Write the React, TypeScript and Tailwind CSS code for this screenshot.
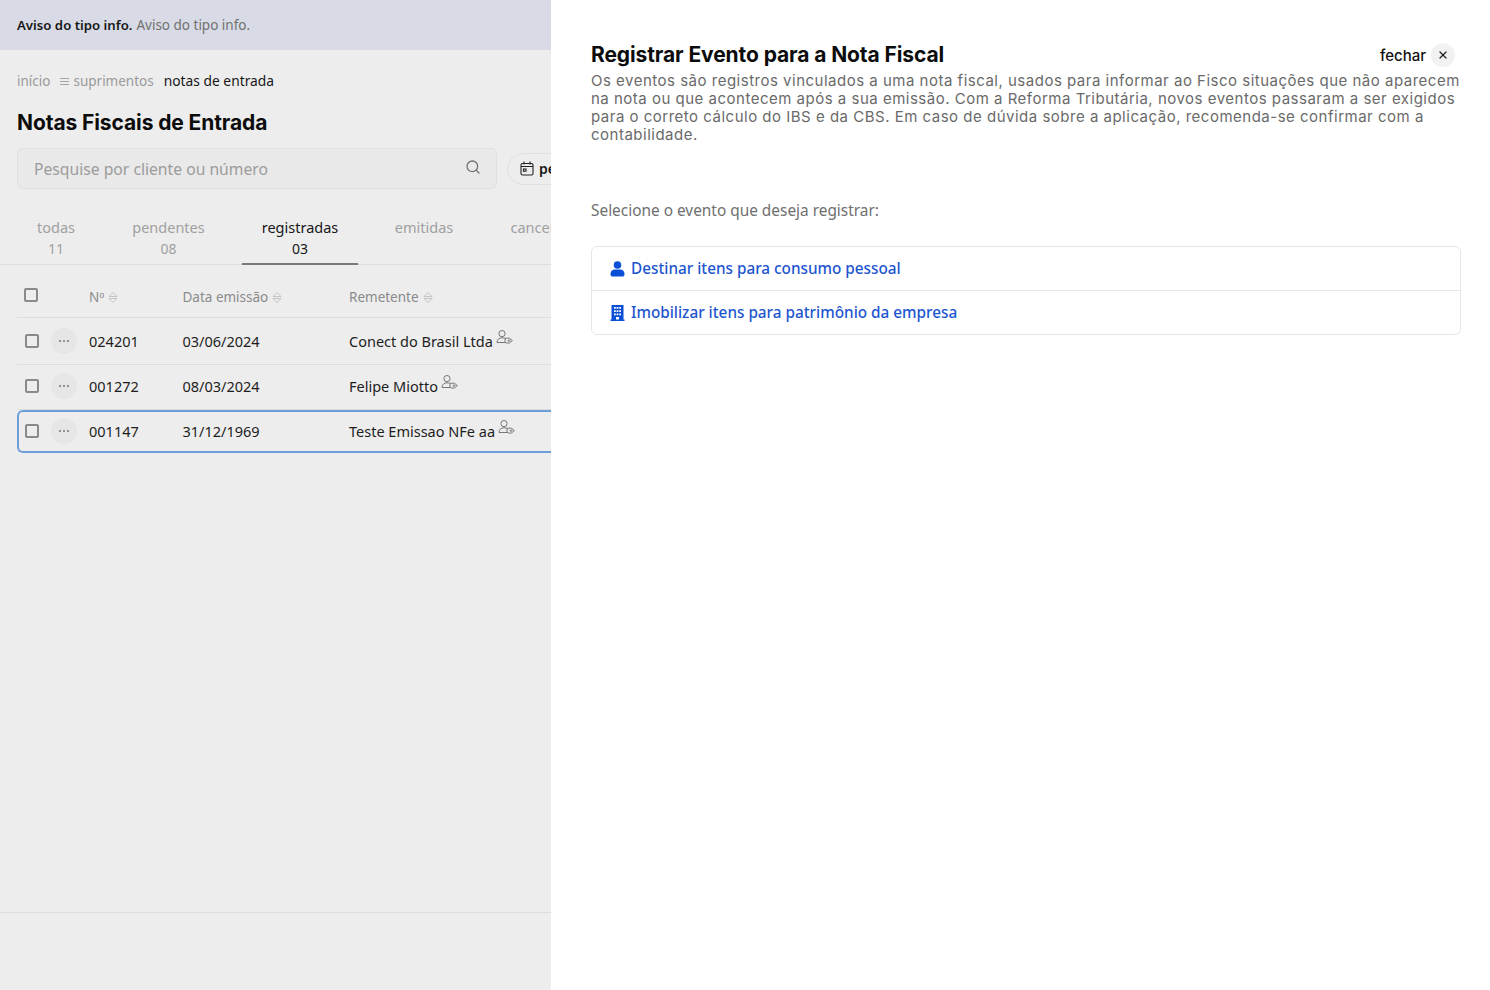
import { useState } from "react";
import { Search, X } from "lucide-react";

const body = "font-['Noto_Sans',sans-serif]";
const head = "font-['Inter',sans-serif]";

function Sort() {
  return (
    <svg width="10" height="13" viewBox="0 0 10 13" fill="none" stroke="#c4c4c4" strokeWidth="1" className="ml-1 mt-px">
      <path d="M1 5.5 L5 1.5 L9 5.5 Z" />
      <path d="M1 7.5 L5 11.5 L9 7.5 Z" />
    </svg>
  );
}

function PersonTag() {
  return (
    <svg width="17" height="14" viewBox="0 0 17 14" fill="none" stroke="#777" strokeWidth="1" className="ml-[3px] -mt-[10px]">
      <circle cx="6" cy="3.6" r="3.1" />
      <path d="M1 12.5 C1 9.4 3.2 7.8 6 7.8 C7.3 7.8 8.4 8 9.4 8.5" />
      <path d="M1 12.5 H10" />
      <path d="M9.4 8.2 H13.4 L16.4 10.6 L13.4 13 H10.4 C9.2 13 8.8 11.5 9 10 Z" />
      <circle cx="13" cy="10.6" r="0.8" />
    </svg>
  );
}

function Box({ className = "" }: { className?: string }) {
  return <div className={`size-[14px] rounded-[2px] border-2 border-[#8a8a8a] ${className}`} />;
}

function More() {
  return (
    <div className="size-[26px] rounded-full bg-[#e6e6e6] flex items-center justify-center gap-[2px] ml-[12px]">
      <span className="size-[2px] rounded-full bg-[#777]" />
      <span className="size-[2px] rounded-full bg-[#777]" />
      <span className="size-[2px] rounded-full bg-[#777]" />
    </div>
  );
}

function Row({ n, d, r, selected, h, ctl }: { n: string; d: string; r: string; selected?: boolean; h: string; ctl: string }) {
  return (
    <div
      className={`flex items-center ${h} ${
        selected ? "border-2 border-r-0 border-[#6d9eda] rounded-l-[6px]" : "border-b border-[#dcdcdc]"
      } ml-[17px] text-[14.5px] text-[#1d1d1d]`}
    >
      <div className={`flex items-center ${ctl}`}>
        <Box />
        <More />
      </div>
      <div className="w-[93.5px]">{n}</div>
      <div className="w-[166.5px]">{d}</div>
      <div className="flex items-center whitespace-nowrap">
        {r}
        <PersonTag />
      </div>
    </div>
  );
}

export default function App() {
  const [tab] = useState("registradas");
  const tabs = [
    ["todas", "11", "w-[78px]"],
    ["pendentes", "08", "w-[115px]"],
    ["registradas", "03", "w-[116px]"],
    ["emitidas", "", "w-[100px]"],
    ["canceladas", "", "w-[116px]"],
  ];
  return (
    <div className={`flex h-[990px] w-[1490px] overflow-hidden bg-white ${body}`}>
      <div className="w-[551px] shrink-0 flex flex-col bg-[#ededed] overflow-hidden">
        <div className="h-[50px] shrink-0 bg-[#d8dbe5] flex items-center pl-[17px] pt-px text-[13.5px]">
          <span className="font-semibold text-[13.2px] text-[#161616]">Aviso do tipo info.</span>
          <span className="ml-1 text-[#707070]">Aviso do tipo info.</span>
        </div>
        <div className="mt-[22px] pl-[17px] h-[18px] flex items-center text-[13.5px] whitespace-nowrap">
          <span className="text-[#9a9a9a] mr-px">início</span>
          <span className="ml-[9px] mr-[4px] flex flex-col gap-[2px] w-[9px]">
            <span className="h-px bg-[#a5a5a5]" />
            <span className="h-px bg-[#a5a5a5]" />
            <span className="h-px bg-[#a5a5a5]" />
          </span>
          <span className="text-[#9a9a9a]">suprimentos</span>
          <span className="ml-[10px] text-[13.8px] text-[#171717]">notas de entrada</span>
        </div>
        <h1 className={`mt-[19px] pl-[17px] h-[28px] leading-[28px] text-[21px] font-bold tracking-[-0.1px] text-[#0c0c0c] whitespace-nowrap ${head}`}>
          Notas Fiscais de Entrada
        </h1>
        <div className="mt-[11px] pl-[17px] flex items-center">
          <div className="w-[480px] h-[41px] shrink-0 rounded-[6px] border border-[#e0e0e0] bg-[#e9e9e9] flex items-center justify-between pl-4 pr-[15px]">
            <span className="text-[15.7px] pt-[3px] text-[#9c9c9c]">Pesquise por cliente ou número</span>
            <Search size={16} strokeWidth={1.9} className="text-[#707070] -mt-1" />
          </div>
          <div className="ml-[10px] h-[32px] w-[80px] shrink-0 rounded-l-full border border-[#e0e0e0] flex items-center pl-[12px] gap-[5px] text-[14px] font-semibold text-[#171717]">
            <svg width="14" height="15" viewBox="0 0 14 15" fill="none" stroke="#222" strokeWidth="1.1" className="shrink-0">
              <rect x="1" y="2.5" width="12" height="11.5" rx="1.5" />
              <path d="M4 0.5 V3.5 M10 0.5 V3.5 M1 5.5 H13" />
              <rect x="3.5" y="8" width="2.5" height="2.2" />
            </svg>
            <span>período</span>
          </div>
        </div>
        <div className="mt-[29px] h-[47px] pl-[17px] flex gap-4 border-b border-[#dcdcdc] whitespace-nowrap text-[14.5px] leading-[21px]">
          {tabs.map(([t, c, w]) => (
            <div
              key={t}
              className={`${w} -mt-px shrink-0 text-center ${
                t === tab ? "text-[#171717] border-b-2 border-[#7a7a7a] h-[48px]" : "text-[#a0a0a0] h-[47px]"
              }`}
            >
              <div>{t}</div>
              <div className="text-[14px]">{c}</div>
            </div>
          ))}
        </div>
        <div className="ml-[17px] h-[53px] pt-[12px] flex items-center border-b border-[#dcdcdc] text-[13.5px] text-[#8a8a8a] whitespace-nowrap">
          <div className="w-[72px] pl-[7px]">
            <Box className="-mt-[5px]" />
          </div>
          <div className="w-[93.5px] flex items-center">Nº<Sort /></div>
          <div className="w-[166.5px] flex items-center">Data emissão<Sort /></div>
          <div className="flex items-center">Remetente<Sort /></div>
        </div>
        <Row n="024201" d="03/06/2024" r="Conect do Brasil Ltda" h="h-[47px] pt-[2px]" ctl="w-[72px] pl-2 pb-[2px]" />
        <Row n="001272" d="08/03/2024" r="Felipe Miotto" h="h-[45px]" ctl="w-[72px] pl-2 pb-[2px]" />
        <Row n="001147" d="31/12/1969" r="Teste Emissao NFe aa" selected h="h-[43px]" ctl="w-[70px] pl-[6px] pb-[2px]" />
        <div className="flex-1" />
        <div className="h-[78px] border-t border-[#dcdcdc]" />
      </div>

      <div className="flex-1 min-w-0 pl-[40px] pr-[29px] pt-[42px]">
        <div className="flex items-start justify-between">
          <h2 className={`h-[26px] leading-[26px] text-[21px] font-bold tracking-[-0.1px] text-[#0c0c0c] ${head}`}>
            Registrar Evento para a Nota Fiscal
          </h2>
          <div className="flex items-center mr-[6px] mt-[1px]">
            <span className={`text-[15px] pt-[2px] font-medium text-[#111] ${head}`}>fechar</span>
            <span className="ml-[5px] size-[24px] rounded-full bg-[#f2f2f3] flex items-center justify-center">
              <X size={12} strokeWidth={2.4} className="text-[#222]" />
            </span>
          </div>
        </div>
        <p className={`mt-[4px] w-[870px] whitespace-nowrap text-[15px] leading-[18px] text-[#6a6a6a] tracking-[0.5px] ${head}`}>
          Os eventos são registros vinculados a uma nota fiscal, usados para informar ao Fisco situações que não aparecem
          <br />
          na nota ou que acontecem após a sua emissão. Com a Reforma Tributária, novos eventos passaram a ser exigidos
          <br />
          para o correto cálculo do IBS e da CBS. Em caso de dúvida sobre a aplicação, recomenda-se confirmar com a
          <br />
          contabilidade.
        </p>
        <p className="mt-[56px] h-[22px] leading-[22px] text-[15.4px] text-[#6f6f6f]">Selecione o evento que deseja registrar:</p>
        <div className="mt-[24px] w-[870px] rounded-[6px] border border-[#e6e6e6] text-[15.3px] font-medium text-[#1e56cf]">
          <div className="h-[44px] flex items-center pl-[18px] border-b border-[#e6e6e6]">
            <svg width="15" height="16" viewBox="0 0 15 16" fill="#0a4fd6" className="shrink-0">
              <circle cx="7.5" cy="4" r="3.8" />
              <path d="M0.5 13 C0.5 9.8 3 8.5 5 8.5 H10 C12 8.5 14.5 9.8 14.5 13 C14.5 15 13.5 15.6 12.5 15.6 H2.5 C1.5 15.6 0.5 15 0.5 13 Z" />
            </svg>
            <span className="ml-[6px]">Destinar itens para consumo pessoal</span>
          </div>
          <div className="h-[43px] flex items-center pl-[18px]">
            <svg width="15" height="16" viewBox="0 0 15 16" className="shrink-0">
              <path fill="#0a4fd6" fillRule="evenodd" d="M1.5 0 H13.5 V14.5 H14.5 V16 H0.5 V14.5 H1.5 Z M4 2 V3.8 H5.8 V2 Z M6.6 2 V3.8 H8.4 V2 Z M9.2 2 V3.8 H11 V2 Z M4 5.2 V7 H5.8 V5.2 Z M6.6 5.2 V7 H8.4 V5.2 Z M9.2 5.2 V7 H11 V5.2 Z M4 8.4 V10.2 H5.8 V8.4 Z M6.6 8.4 V10.2 H8.4 V8.4 Z M9.2 8.4 V10.2 H11 V8.4 Z M6 12 V14.5 H9 V12 Z" />
            </svg>
            <span className="ml-[6px]">Imobilizar itens para patrimônio da empresa</span>
          </div>
        </div>
      </div>
    </div>
  );
}
